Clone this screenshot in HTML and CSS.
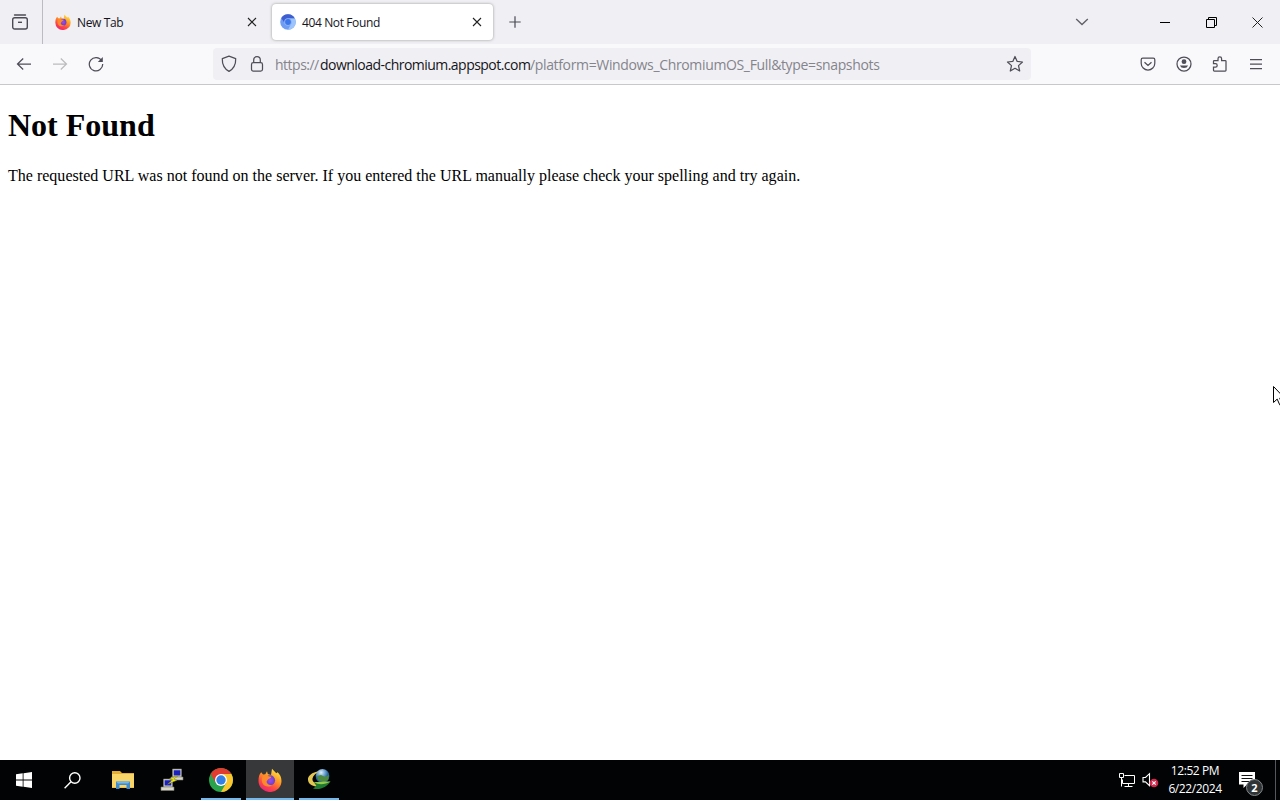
FILE: index.html
```html
<!DOCTYPE html>
<html lang="en">
<head>
<meta charset="utf-8">
<title>404 Not Found</title>
<link rel="stylesheet" href="styles.css">
</head>
<body>
<svg width="0" height="0" class="defs" aria-hidden="true">
  <defs>
    <linearGradient id="flame" x1=".8" y1="0" x2=".25" y2="1"><stop offset="0" stop-color="#ffe94d"/><stop offset=".4" stop-color="#ff9a24"/><stop offset=".7" stop-color="#ff4a42"/><stop offset="1" stop-color="#e8227a"/></linearGradient>
    <radialGradient id="globe"><stop offset="0" stop-color="#a24bea"/><stop offset="1" stop-color="#6840c8"/></radialGradient>
    <radialGradient id="earth" cx=".4" cy=".25"><stop offset="0" stop-color="#e4f1fb"/><stop offset=".6" stop-color="#6a9fce"/><stop offset="1" stop-color="#27659f"/></radialGradient>
    <symbol id="firefox" viewBox="0 0 24 24">
      <path fill="url(#flame)" d="M3.2 4.2 5 6.5l2.3-.3L9 3.3l.8 2.6L13 7l1-6.2 3.8 4 1.2.4.4-1.3c2.7 2.3 4.1 5.500 4.100 9A11.500 11.100 0 0 1 .5 13c0-3.600.6-6.800 2.700-8.800z"/>
      <circle cx="12" cy="12.300" r="5.100" fill="url(#globe)"/>
      <path fill="#ff8a2b" d="M4.500 8.500c2-1.500 4.500-1.500 6.200-.2l2.600.5c-.3 1.500-2 1.700-3 2.300-.4 1.400-2 1.400-1.600 3.200.5 2 3 3.400 5.600 2.600-2.500 2.700-8 2-9.800-1.700-1-2-.9-4.600 0-6.700z"/>
    </symbol>
  </defs>
</svg>

<header class="tabbar">
  <div class="view-btn">
    <svg width="18" height="18" viewBox="0 0 18 18" fill="none" stroke="#4b4a54" stroke-width="1.400"><path d="M3.500 2h11" stroke-linecap="round"/><rect x="1.700" y="4.700" width="14.600" height="11.300" rx="2"/><path d="M7 9.300h4"/></svg>
  </div>
  <div class="tab">
    <svg class="fav" width="16" height="16"><use href="#firefox"/></svg>
    <span class="tab-title">New Tab</span>
    <svg class="close" width="10" height="10" viewBox="0 0 10 10"><path d="m1 1 8 8M9 1 1 9"/></svg>
  </div>
  <div class="tab active">
    <svg class="fav" width="16" height="16" viewBox="0 0 16 16"><circle cx="8" cy="8" r="7.800" fill="#6f9df3"/><path d="M1.200 4A7.800 7.800 0 0 1 14.900 4.500H8A3.600 3.600 0 0 0 4.600 9z" fill="#3f5fd0"/><path d="M14.900 4.500A7.800 7.800 0 0 1 8 15.800L11.200 9.700C12 8 11 5.500 9 4.500z" fill="#9ec5fb"/><circle cx="8" cy="8" r="3.800" fill="#8fb5f8"/><circle cx="8" cy="8" r="2.900" fill="#3c78ec"/></svg>
    <span class="tab-title">404 Not Found</span>
    <svg class="close" width="10" height="10" viewBox="0 0 10 10"><path d="m1 1 8 8M9 1 1 9"/></svg>
  </div>
  <svg class="plus" width="12" height="12" viewBox="0 0 12 12"><path d="M6 .3v11.400M.3 6h11.400"/></svg>
  <div class="window-btns">
    <svg width="14" height="14" viewBox="0 0 14 14" fill="none" stroke="#62616a" stroke-width="1.400"><path d="m1.200 4 5.800 5.500L12.800 4"/></svg>
    <svg width="10" height="11" viewBox="0 0 10 11" stroke="#000"><path d="M0 5.500h10"/></svg>
    <svg width="11" height="11" viewBox="0 0 11 11" fill="none" stroke="#000"><path d="M.5 2.500h8v8h-8zM2.500 2.500v-2h8v8h-2"/></svg>
    <svg width="11" height="11" viewBox="0 0 11 11" stroke="#222"><path d="m.5.5 10 10M10.500.5l-10 10"/></svg>
  </div>
</header>

<nav class="toolbar">
  <div class="nav-btns">
    <svg width="16" height="16" viewBox="0 0 16 16"><path d="M15 8H1.500M7.200 2.500 1.500 8l5.700 5.500"/></svg>
    <svg class="disabled" width="16" height="16" viewBox="0 0 16 16"><path d="M1 8h13.500M8.800 2.500 14.500 8l-5.700 5.500"/></svg>
    <svg width="16" height="16" viewBox="0 0 16 16"><path d="M13.700 4.700A6.700 6.700 0 1 0 14.700 8"/><path d="M14.800 1v5H9.800z" fill="#4f4e58" stroke="none"/></svg>
  </div>
  <div class="urlbar">
    <svg width="16" height="18" viewBox="0 0 16 18"><path d="M8 1.200 14.700 3.700C14.900 9.500 13 13.500 8 16.400 3 13.500 1.100 9.500 1.300 3.700z" stroke-linejoin="round"/></svg>
    <svg class="lock" width="14" height="18" viewBox="0 0 14 18"><rect x="1.500" y="7.700" width="11" height="8.300" rx="1.800"/><path d="M3.700 7.700V5a3.300 3.300 0 0 1 6.600 0v2.700"/></svg>
    <div class="url"><span class="scheme">https://</span><span class="domain">download-chromium.appspot.com</span><span class="path">/platform=Windows_ChromiumOS_Full&amp;type=snapshots</span></div>
    <svg class="star" width="18" height="18" viewBox="0 0 18 18"><path d="m9 1.500 2.200 4.900 5.300.6-4 3.600 1.200 5.400L9 13.300 4.300 16l1.200-5.400-4-3.600 5.300-.6z" stroke-linejoin="round"/></svg>
  </div>
  <div class="tools">
    <svg width="16" height="16" viewBox="0 0 16 16"><path d="M2.700 2.200h10.600a1.500 1.500 0 0 1 1.500 1.500v3.500a6.800 6.800 0 0 1-13.600 0V3.700a1.500 1.500 0 0 1 1.500-1.500zM4.500 6.200 8 9.500l3.500-3.300"/></svg>
    <svg width="16" height="16" viewBox="0 0 16 16"><circle cx="8" cy="8" r="7"/><circle cx="8" cy="5.700" r="2.400" fill="#4f4e58" stroke="none"/><path d="M3.900 9.500h8.200a4.300 3.600 0 0 1-8.200 0z" fill="#4f4e58" stroke="none"/></svg>
    <svg width="16" height="16" viewBox="0 0 16 16"><path d="M2.300 15.100a.8.800 0 0 1-.8-.8v-3.200h2a1.700 1.700 0 0 0 0-3.400h-2V5.300c0-.5.3-.8.800-.8H6V2.700a1.800 1.800 0 0 1 3.600 0v1.800h3.600c.5 0 .8.300.8.800v9a.8.800 0 0 1-.8.800z"/></svg>
    <svg width="16" height="16" viewBox="0 0 16 16"><path d="M2 3.500h12M2 8h12M2 12.500h12"/></svg>
  </div>
</nav>

<main class="page">
  <h1>Not Found</h1>
  <p>The requested URL was not found on the server. If you entered the URL manually please check your spelling and try again.</p>
  <svg class="cursor" width="12" height="20" viewBox="0 0 12 20"><path d="M.5.500v16l3.700-3.400 2.500 5.700 2.400-1-2.400-5.600h5z" fill="#fff" stroke="#000"/></svg>
</main>

<footer class="taskbar">
  <div class="task"><svg width="16" height="16" viewBox="0 0 16 16" fill="#fff"><path d="M0 2.200 6.700 1.300v6.300H0zM7.500 1.200 16 0v7.600H7.500zM0 8.400h6.700v6.300L0 13.800zM7.500 8.400H16V16l-8.500-1.200z"/></svg></div>
  <div class="task"><svg width="17" height="17" viewBox="0 0 17 17" fill="none" stroke="#fff" stroke-width="1.400"><circle cx="10.800" cy="6" r="5.200"/><path d="M7 9.800.6 16.200"/></svg></div>
  <div class="task explorer"><svg width="22" height="18" viewBox="0 0 22 18"><path d="M0 0h8l2 2h12v15H0z" fill="#e4ac35"/><path d="M0 3h22v13.500H0z" fill="#f9d468"/><path d="M4 10.500h14V18h-3.500v-4h-7v4H4z" fill="#3f8bd0"/><path d="M4 10.500h14l-2 2H6z" fill="#73b7ec"/></svg></div>
  <div class="task"><svg width="24" height="24" viewBox="0 0 24 24"><g stroke="#77776f" stroke-width=".6"><path d="M12.500 1h9v8h-9zM3.500 11h9v8h-9z" fill="#d8d6c8"/><path d="M11 9h12v3H11zM1 19h13v3.500H1z" fill="#d8d6c8"/></g><path d="M13.700 2.300h6.700v5.300h-6.700zM4.600 12.300h6.700v5.300H4.600z" fill="#1920bd"/><path d="m18.500 7.500-9 3.300 3.200 1-5.200 4.400 9.500-4-3.300-1.200z" fill="#f5ef20" stroke="#77770b" stroke-width=".5"/></svg></div>
  <div class="task"><svg width="24" height="24" viewBox="0 0 24 24"><circle cx="12" cy="12" r="12" fill="#29a44d"/><path d="M1.610 6A12 12 0 0 1 22.390 6H12L6.800 15z" fill="#e23b30"/><path d="M22.390 6A12 12 0 0 1 12 24L17.200 15 12 6z" fill="#fbc62e"/><circle cx="12" cy="12" r="6" fill="#fff"/><circle cx="12" cy="12" r="4.700" fill="#347fe5"/></svg><i class="open-mark"></i></div>
  <div class="task current"><svg width="24" height="24"><use href="#firefox"/></svg><i class="open-mark"></i></div>
  <div class="task"><svg width="24" height="24" viewBox="0 0 24 24"><circle cx="15.500" cy="8" r="6.900" fill="url(#earth)"/><path d="m10 8 4-1 4 2 4-2-1 5-5 2-5-2z" fill="#4d8a3c"/><path d="M12 3.500C5 4 .5 8 1 12c.5 4 4 6 8 6.500L12 15c-4 .5-7-1-6.500-4.500C6 7.500 8.500 5.500 12 3.500z" fill="#e2c653"/><path d="M7 14.500C12 16 17 14 23.500 13.500 20 19 13 22.500 6 20.500l3.500-2.500z" fill="#1d7a30"/><path d="M7 14c5 .5 10-1 16.500-.5C18 16.500 12 17.500 7 14z" fill="#93c94a"/></svg><i class="open-mark"></i></div>
  <div class="tray">
    <svg class="net" width="18" height="16" viewBox="0 0 18 16" fill="none" stroke="#fff"><path d="M6.500 3.500h10v8h-12V7.500M10.500 11.500v3M6.500 14.500h8M1.500 1.500h4v4h-4zM3.500 5.500v9"/></svg>
    <svg class="sound" width="18" height="16" viewBox="0 0 18 16"><path d="M1 5.500h2.500L7.500 1.700v12L3.500 9.900H1z" fill="none" stroke="#fff" stroke-width="1.100"/><circle cx="12" cy="11" r="4.300" fill="#d3274c"/><path d="m10.300 9.300 3.400 3.400M13.700 9.300l-3.400 3.400" stroke="#fff" stroke-width="1.200"/></svg>
    <div class="clock"><span>12:52 PM</span><span>6/22/2024</span></div>
    <div class="notes">
      <svg width="16" height="16" viewBox="0 0 16 16"><path d="M0 0h16v12.500H8L4.500 16v-3.500H0z" fill="#fff"/><path d="M2.500 3.500h11M2.500 6.500h11M2.500 9.500h11" stroke="#111"/></svg>
      <b class="count">2</b>
    </div>
    <i class="desktop-edge"></i>
  </div>
</footer>
</body>
</html>
```
FILE: styles.css
```css
* { box-sizing: border-box; }

body {
  margin: 0;
  height: 100vh;
  overflow: hidden;
  display: flex;
  flex-direction: column;
  background: #fff;
  font-family: "Open Sans", "Noto Sans", sans-serif;
}

svg { display: block; flex: none; }
.defs { position: absolute; }

.tabbar {
  height: 44px;
  flex: none;
  display: flex;
  align-items: center;
  background: #f0f0f4;
}

.view-btn {
  width: 43px;
  height: 44px;
  padding: 13px 0 0 11px;
  border-right: 1px solid #bcbbc4;
}

.tab {
  width: 221px;
  height: 36px;
  margin-left: 4px;
  padding: 0 11px 0 8px;
  display: flex;
  align-items: center;
  border-radius: 4px;
}

.tab.active {
  background: #fff;
  box-shadow: 0 0 3px rgba(90, 90, 90, .6);
}

.tab-title {
  flex: 1;
  margin-left: 6px;
  padding-top: 1px;
  font-size: 12px;
  letter-spacing: -.38px;
  color: #15141a;
}

.close { fill: none; stroke: #222; stroke-width: 1.1; }
.plus { margin-left: 16px; stroke: #4b4a54; stroke-width: 1.2; }

.window-btns {
  margin-left: auto;
  padding-right: 17px;
  display: flex;
  align-items: center;
}
.window-btns svg:nth-child(2) { margin-left: 71px; }
.window-btns svg:nth-child(3) { margin-left: 36px; }
.window-btns svg:nth-child(4) { margin-left: 35px; }

.toolbar {
  height: 41px;
  flex: none;
  display: flex;
  align-items: center;
  background: #f9f9fb;
  border-bottom: 1px solid #c8c8cc;
}
.toolbar svg { fill: none; stroke: #4f4e58; stroke-width: 1.25; }
.toolbar .disabled { stroke: #bcbcc0; }

.nav-btns { display: flex; gap: 20px; margin-left: 16px; }

.urlbar {
  width: 818px;
  height: 32px;
  margin-left: 109px;
  padding: 0 7px 0 8px;
  display: flex;
  align-items: center;
  background: #f0f0f4;
  border-radius: 4px;
}
.lock { margin-left: 13px; }
.url {
  flex: 1;
  margin-left: 11px;
  padding-top: 2px;
  display: flex;
  font-size: 14px;
  line-height: 20px;
  white-space: nowrap;
}
.scheme, .path { color: #85848c; }
.scheme { width: 45px; letter-spacing: -.5px; }
.domain { width: 210px; letter-spacing: -.53px; color: #15141a; }
.path { letter-spacing: -.35px; }

.tools { display: flex; gap: 20px; margin-left: auto; padding-right: 16px; }

.page {
  position: relative;
  flex: 1;
  padding: 0 8px;
  font-family: "Liberation Serif", serif;
  font-size: 16px;
  color: #000;
}
.page h1 { margin: 22px 0 21px; font-size: 32px; line-height: 37px; }
.page p { margin: 0; line-height: 21px; letter-spacing: .01px; white-space: nowrap; }
.cursor { position: absolute; left: 1273px; top: 301px; }

.taskbar {
  height: 40px;
  flex: none;
  display: flex;
  background: #020304;
  color: #fff;
}
.task {
  position: relative;
  width: 48px;
  display: flex;
  align-items: center;
  justify-content: center;
}
.explorer { margin-left: 3px; }
.explorer ~ .task { margin-left: 1px; }
.current { background: #37383a; }
.open-mark {
  position: absolute;
  left: 4px;
  right: 4px;
  bottom: 0;
  height: 2px;
  background: #76b9ed;
}
.current .open-mark { left: 0; right: 0; }

.tray { margin-left: auto; display: flex; align-items: center; }
.sound { margin-left: 6px; }
.clock {
  width: 56px;
  margin-left: 7px;
  display: flex;
  flex-direction: column;
  align-items: center;
  font-size: 12px;
  line-height: 18px;
  letter-spacing: -.4px;
  white-space: nowrap;
}
.notes { position: relative; margin-left: 16px; width: 36px; }
.count {
  position: absolute;
  left: 7px;
  top: 7px;
  width: 17px;
  height: 17px;
  border: 1px solid #84888b;
  border-radius: 50%;
  background: #303437;
  font-size: 11px;
  line-height: 15px;
  text-align: center;
}
.desktop-edge { width: 1px; height: 40px; margin-right: 4px; background: #55585a; }
```
